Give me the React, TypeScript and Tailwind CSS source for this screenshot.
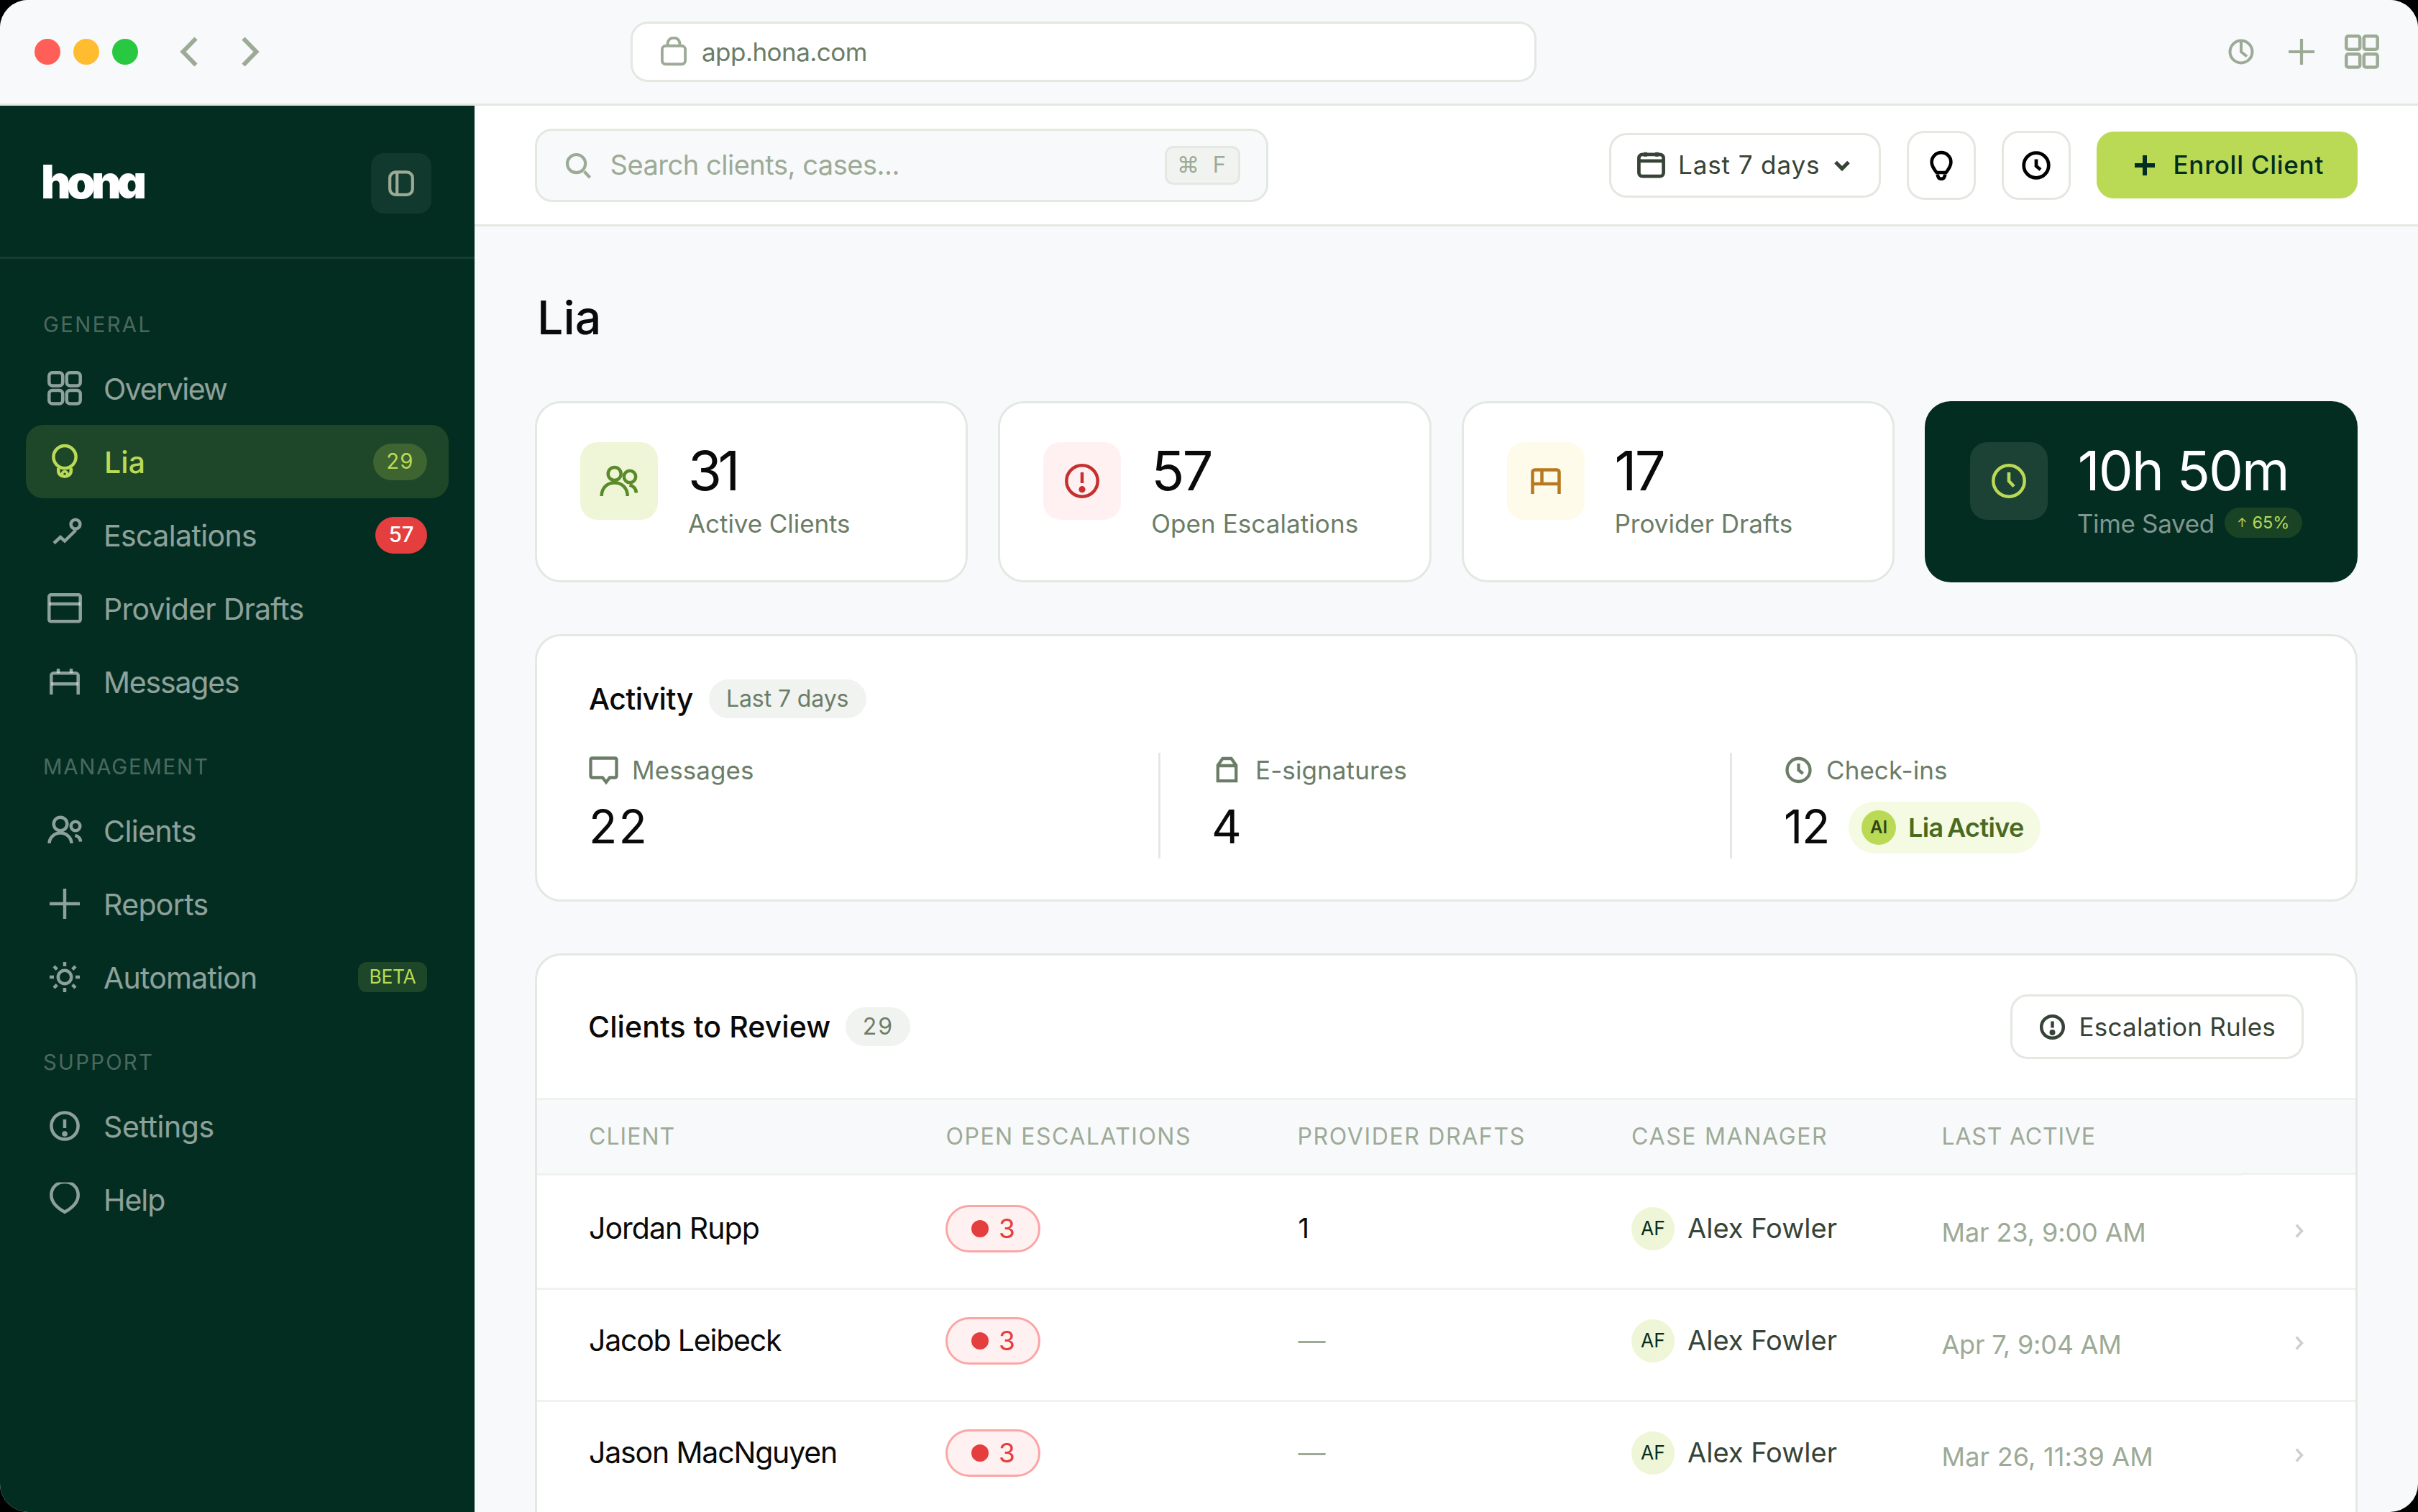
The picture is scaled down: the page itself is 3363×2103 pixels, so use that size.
import React from 'react'
import type { ReactNode } from 'react'

type IconProps = { w: number; h?: number; sw?: number; children: ReactNode; className?: string }

function Icon({ w, h = w, sw = 4.5, children, className = '' }: IconProps) {
  return (
    <svg
      width={w}
      height={h}
      viewBox={`0 0 ${w} ${h}`}
      fill="none"
      stroke="currentColor"
      strokeWidth={sw}
      className={`block shrink-0 ${className}`}
      aria-hidden="true"
    >
      {children}
    </svg>
  )
}

const GridIcon = () => (
  <Icon w={54} className="opacity-55">
    <rect x="5.3" y="5.3" width="18.9" height="18.2" rx="4.5" />
    <rect x="29.8" y="5.3" width="18.9" height="18.2" rx="4.5" />
    <rect x="5.3" y="30" width="18.9" height="18.6" rx="4.5" />
    <rect x="29.8" y="30" width="18.9" height="18.6" rx="4.5" />
  </Icon>
)

const LiaIcon = () => (
  <Icon w={54}>
    <circle cx="27" cy="20.6" r="15.6" />
    <path d="M18.2 36v4a8.8 7.8 0 0 0 17.6 0v-4" />
    <path d="M23.6 45v-1a3.4 3.4 0 0 1 6.800 0v1" strokeWidth="3.6" />
  </Icon>
)

const EscalationIcon = () => (
  <Icon w={54} className="opacity-55">
    <circle cx="42" cy="12.2" r="6.4" />
    <path d="M12 38.5 21 30l6 5.5L42.4 20.5" />
  </Icon>
)

const DraftsIcon = () => (
  <Icon w={54}>
    <rect x="5.3" y="8.3" width="43.4" height="37" rx="2.5" opacity=".55" />
    <path d="M5.3 21h43.4" opacity=".55" />
  </Icon>
)

const MessagesIcon = () => (
  <Icon w={54}>
    <path d="M8.3 45V18.5a3.2 3.2 0 0 1 3.2-3.2h31a3.2 3.2 0 0 1 3.2 3.2V45" opacity=".55" />
    <path d="M8.3 30.2h37.4M18 9v6M36 9v6" opacity=".55" />
  </Icon>
)

const ClientsIcon = () => (
  <Icon w={54} className="opacity-55">
    <circle cx="21" cy="18" r="9.3" />
    <path d="M5.6 45a15.4 14.4 0 0 1 30.8 0" />
    <circle cx="42" cy="21" r="6.3" />
    <path d="M41.5 33.8c4.6 1.4 7.4 4.3 7.6 8.9" />
  </Icon>
)

const ReportsIcon = () => (
  <Icon w={54} className="opacity-55">
    <path d="M27 6v42M6 27h42" />
  </Icon>
)

const AutomationIcon = () => (
  <Icon w={54} className="opacity-55">
    <circle cx="27" cy="27" r="9.2" />
    <path d="M27 6v6M27 42v6M6 27h6M42 27h6M12 12l4.3 4.3M37.7 37.7l4.3 4.3M12 42l4.3-4.3M37.7 16.3 42 12" />
  </Icon>
)

const SettingsIcon = () => (
  <Icon w={54} className="opacity-55">
    <circle cx="27" cy="27" r="18.6" />
    <path d="M27 18v12" />
    <circle cx="27" cy="38" r="3.8" fill="currentColor" stroke="none" />
  </Icon>
)

const HelpIcon = () => (
  <Icon w={54} className="opacity-55">
    <clipPath id="help-clip">
      <rect x="0" y="3.4" width="54" height="50" />
    </clipPath>
    <path
      clipPath="url(#help-clip)"
      d="M27 44.8C17.5 39.5 8.3 31 8.3 21.2 8.3 10.5 16.5 3 27 3s18.7 7.5 18.7 18.2C45.7 31 36.5 39.5 27 44.8Z"
    />
  </Icon>
)

type NavEntry = { label: string; ls: string; icon: () => ReactNode; badge?: ReactNode; active?: boolean }

const NAV: { title: string; ls: string; items: NavEntry[] }[] = [
  {
    title: 'GENERAL',
    ls: 'tracking-[0.081em]',
    items: [
      { label: 'Overview', ls: 'tracking-[-0.036em]', icon: GridIcon },
      {
        label: 'Lia',
        ls: 'tracking-[0.004em]',
        icon: LiaIcon,
        active: true,
        badge: (
          <span className="flex h-[51px] w-[75px] items-center justify-center rounded-full bg-[#bada55]/20 text-[29.3px] tracking-[0.04em] text-[#bada55]">
            29
          </span>
        ),
      },
      {
        label: 'Escalations',
        ls: 'tracking-[-0.015em]',
        icon: EscalationIcon,
        badge: (
          <span className="flex h-[51px] w-[72px] items-center justify-center rounded-full bg-[#e53e3e] text-[29.3px] font-[450] tracking-[-0.007em] text-white">
            57
          </span>
        ),
      },
      { label: 'Provider Drafts', ls: 'tracking-[-0.019em]', icon: DraftsIcon },
      { label: 'Messages', ls: 'tracking-[-0.029em]', icon: MessagesIcon },
    ],
  },
  {
    title: 'MANAGEMENT',
    ls: 'tracking-[0.062em]',
    items: [
      { label: 'Clients', ls: 'tracking-[-0.013em]', icon: ClientsIcon },
      { label: 'Reports', ls: 'tracking-[-0.016em]', icon: ReportsIcon },
      {
        label: 'Automation',
        ls: 'tracking-[-0.019em]',
        icon: AutomationIcon,
        badge: (
          <span className="flex h-[42px] w-[96px] items-center justify-center rounded-[12px] bg-[#bada55]/15 text-[26.4px] tracking-[-0.011em] text-[#bada55]">
            BETA
          </span>
        ),
      },
    ],
  },
  {
    title: 'SUPPORT',
    ls: 'tracking-[0.078em]',
    items: [
      { label: 'Settings', ls: 'tracking-[-0.01em]', icon: SettingsIcon },
      { label: 'Help', ls: 'tracking-[-0.025em]', icon: HelpIcon },
    ],
  },
]

function BrowserBar() {
  return (
    <header className="flex h-[147px] shrink-0 items-center border-b-3 border-[#e3e8e1] bg-[#f8f9fb] pr-[54px] pl-[48px] text-[#9caa96]">
      <div className="flex gap-[18px]">
        <span className="size-9 rounded-full bg-[#ff5f57]" />
        <span className="size-9 rounded-full bg-[#febc2e]" />
        <span className="size-9 rounded-full bg-[#28c840]" />
      </div>
      <Icon w={25} h={42} sw={6} className="ml-[58px]">
        <path d="M22.5 2.500 4.500 21l18 18.500" />
      </Icon>
      <Icon w={25} h={42} sw={6} className="ml-[61px]">
        <path d="M2.500 2.500 20.500 21l-18 18.500" />
      </Icon>
      <div className="ml-[516px] flex h-[84px] w-[1260px] items-center rounded-[24px] border-3 border-[#e3e8e1] bg-white pl-[39px]">
        <Icon w={36} h={42} sw={3.9}>
          <rect x="1.9" y="12.8" width="32.2" height="25.5" rx="5" />
          <path d="M9.500 12.500V10a8.500 8.500 0 0 1 17 0v2.500" />
        </Icon>
        <span className="ml-[21px] text-[35px] tracking-[-0.0155em] text-[#6b7d67]">app.hona.com</span>
      </div>
      <Icon w={36} sw={4} className="ml-auto">
        <circle cx="18" cy="18" r="15.5" />
        <path d="M18 3v15l8 6.5" />
      </Icon>
      <Icon w={36} sw={4.2} className="ml-[48px]">
        <path d="M18 0v36M0 18h36" />
      </Icon>
      <Icon w={48} sw={4.5} className="ml-[42px]">
        <rect x="2.3" y="2.3" width="18.9" height="18.4" rx="2.8" />
        <rect x="26.8" y="2.3" width="18.9" height="18.4" rx="2.8" />
        <rect x="2.3" y="27.2" width="18.9" height="18.4" rx="2.8" />
        <rect x="26.8" y="27.2" width="18.9" height="18.4" rx="2.8" />
      </Icon>
    </header>
  )
}

function Sidebar() {
  return (
    <aside className="w-[660px] shrink-0 bg-[#032d20] text-white">
      <div className="flex items-center justify-between border-b-3 border-white/8 px-[60px] pt-[66px] pb-[60px]">
        <span className="-mt-[4px] -ml-[3px] text-[64px] leading-[64px] font-black tracking-[-0.09em] [font-feature-settings:'cv11']">
          hona
        </span>
        <button className="flex size-[84px] items-center justify-center rounded-[18px] bg-white/6 text-[#9caa96]">
          <Icon w={36} sw={4.2}>
            <rect x="2.2" y="2.4" width="31.600" height="31.400" rx="8" />
            <path d="M12.2 2v32" />
          </Icon>
        </button>
      </div>
      <nav className="flex flex-col gap-[49.5px] px-9 pt-[73.5px]">
        {NAV.map((group) => (
          <section key={group.title}>
            <h2 className={`mb-[19.5px] pl-6 text-[29.3px] leading-[36px] text-white/30 ${group.ls}`}>{group.title}</h2>
            {group.items.map(({ label, ls, icon: Glyph, badge, active }) => (
              <a
                key={label}
                className={`flex h-[102px] items-center rounded-[24px] pr-[30px] pl-[27px] ${
                  active ? 'bg-[#bada55]/15 text-[#bada55]' : 'text-white'
                }`}
              >
                <Glyph />
                <span
                  className={`ml-[27px] flex-1 pt-[2px] text-[41px] leading-[54px] whitespace-nowrap ${ls} ${
                    active ? 'pl-px font-[450]' : 'text-white/55'
                  }`}
                >
                  {label}
                </span>
                {badge}
              </a>
            ))}
          </section>
        ))}
      </nav>
    </aside>
  )
}

function TopBar() {
  return (
    <div className="flex h-[168px] shrink-0 items-center border-b-3 border-[#e3e8e1] bg-white px-[84px]">
      <div className="mr-auto flex h-[102px] w-[1020px] items-center rounded-[24px] border-3 border-[#e3e8e1] bg-[#f8f9fb] pr-[36px] pl-[39px] text-[#9caa96]">
        <Icon w={38} sw={4.2}>
          <circle cx="15.6" cy="16.6" r="12.6" />
          <path d="M26.500 27.500 34.500 36" />
        </Icon>
        <span className="ml-[24.5px] text-[38px] tracking-[-0.0125em]">Search clients, cases...</span>
        <kbd className="ml-auto flex h-[54px] w-[105px] items-center justify-between rounded-[12px] border-3 border-[#e3e8e1] bg-[#f1f3f0] pr-[17px] pl-[14px] font-['Inter'] text-[31px]">
          <span>⌘</span>
          <span>F</span>
        </kbd>
      </div>
      <div className="flex items-center gap-9 text-[35px]">
        <button className="flex h-[90px] w-[378px] items-center rounded-[24px] border-3 border-[#e3e8e1] pl-[36px] text-[#364336]">
          <Icon w={39} h={39} sw={4.7}>
            <rect x="2.4" y="4.8" width="34.2" height="30.4" rx="5" />
            <path d="M2.4 13.8h34.200M11.500 1.800v6M27.500 1.800v6" />
          </Icon>
          <span className="ml-[18px] tracking-[0.0254em]">Last 7 days</span>
          <Icon w={24} h={18} sw={5.2} className="ml-[19px]">
            <path d="m3 4.500 9 9 9-9" />
          </Icon>
        </button>
        <button className="flex size-[96px] items-center justify-center rounded-[24px] border-3 border-[#e3e8e1] text-black">
          <Icon w={42} sw={4.6}>
            <path d="M14.500 31C10.500 26 7.600 21.500 7.600 16.500a13.400 13.400 0 0 1 26.800 0c0 5-2.900 9.500-6.900 14.500Z" />
            <path d="M15.700 33.500c.5 4.300 2.400 6.300 5.300 6.300s4.800-2 5.300-6.300" />
          </Icon>
        </button>
        <button className="flex size-[96px] items-center justify-center rounded-[24px] border-3 border-[#e3e8e1] text-black">
          <Icon w={42} sw={4.700}>
            <circle cx="21" cy="21" r="17.3" />
            <path d="M21 12.500V22l6 5" />
          </Icon>
        </button>
        <button className="flex h-[93px] w-[363px] items-center rounded-[24px] bg-[#bada55] pl-[53px] font-[450] text-[#032d20]">
          <Icon w={28} sw={6}>
            <path d="M14 0v28M0 14h28" />
          </Icon>
          <span className="ml-[25.5px] tracking-[0.021em]">Enroll Client</span>
        </button>
      </div>
    </div>
  )
}

const STATS = [
  {
    value: '31',
    vls: 'tracking-[-0.07em]',
    label: 'Active Clients',
    lls: 'tracking-[-0.002em]',
    tile: 'bg-[#eff6d7] text-[#5a8a2a]',
    icon: (
      <Icon w={54} sw={4.5}>
        <circle cx="20.7" cy="17" r="9" />
        <path d="M2.7 48C2.7 37 10 29.5 20.7 29.5S38.7 37 38.7 48" />
        <circle cx="42" cy="21" r="8.2" />
        <path d="M41.500 32.500c6 1.500 9 5 9.500 11" />
      </Icon>
    ),
  },
  {
    value: '57',
    vls: 'tracking-[-0.04em]',
    label: 'Open Escalations',
    lls: 'tracking-[0.002em]',
    tile: 'bg-[#fff1f1] text-[#c53030]',
    icon: (
      <Icon w={48}>
        <circle cx="24" cy="24" r="21.7" />
        <path d="M24 12v15" />
        <circle cx="24" cy="35.7" r="4.6" fill="currentColor" stroke="none" />
      </Icon>
    ),
  },
  {
    value: '17',
    vls: 'tracking-[-0.035em]',
    label: 'Provider Drafts',
    lls: 'tracking-[0em]',
    tile: 'bg-[#fffbeb] text-[#b7791f]',
    icon: (
      <Icon w={54}>
        <path d="M8.500 45V14.500a3 3 0 0 1 3-3h31a3 3 0 0 1 3 3V45M8.500 31h37M21.500 11.500V31" />
      </Icon>
    ),
  },
]

function StatCards() {
  return (
    <div className="grid grid-cols-4 gap-[42px]">
      {STATS.map((s) => (
        <div
          key={s.label}
          className="flex h-[252px] gap-[42px] rounded-[36px] border-3 border-[#e4e8e2] bg-white pt-[54px] pl-[60px]"
        >
          <span className={`flex size-[108px] shrink-0 items-center justify-center rounded-[24px] ${s.tile}`}>{s.icon}</span>
          <div className="whitespace-nowrap">
            <p className={`h-[78px] text-[76px] leading-[78px] font-[430] text-[#0a0a0a] ${s.vls}`}>{s.value}</p>
            <p className={`mt-[8px] text-[35px] leading-[54px] text-[#6b7d67] ${s.lls}`}>{s.label}</p>
          </div>
        </div>
      ))}
      <div className="flex h-[252px] gap-[42px] rounded-[36px] bg-[#032d20] pt-[57px] pl-[63px] text-white">
        <span className="flex size-[108px] shrink-0 items-center justify-center rounded-[24px] bg-white/10 text-[#bada55]">
          <Icon w={48}>
            <circle cx="24" cy="24" r="21.7" />
            <path d="M24 12v12l7 7.5" />
          </Icon>
        </span>
        <div className="whitespace-nowrap">
          <p className="h-[78px] text-[76px] leading-[78px] font-[430] tracking-[-0.024em]">10h 50m</p>
          <p className="mt-[8px] flex items-center text-[35px] leading-[54px] text-white/50">
            <span className="-ml-px tracking-[-0.0094em]">Time Saved</span>
            <span className="-mt-[3px] ml-[14px] flex h-[42px] w-[108px] items-center justify-center gap-[7px] rounded-full bg-[#bada55]/13 text-[23.5px] text-[#bada55]">
              <span className="text-[17px]">↑</span>
              <span>65%</span>
            </span>
          </p>
        </div>
      </div>
    </div>
  )
}

function Activity() {
  return (
    <section className="mt-[72px] h-[372px] rounded-[36px] border-3 border-[#e4e8e2] bg-white px-[72px] pt-[60px]">
      <div className="flex items-center">
        <h2 className="text-[41px] leading-[54px] font-[450] tracking-[-0.013em] text-[#0a0a0a]">Activity</h2>
        <span className="ml-[22px] flex h-[54px] w-[219px] items-center justify-center rounded-full bg-[#f1f3f0] text-[32px] tracking-[-0.003em] text-[#6b7d67]">
          Last 7 days
        </span>
      </div>
      <div className="mt-[48px] grid h-[147px] grid-cols-3 text-[#6b7d67]">
        <div className="border-r-3 border-[#e4e8e2]">
          <div className="flex h-12 items-center gap-[18px] text-[35px]">
            <Icon w={42} sw={4.3}>
              <path d="M4.500 4.500h32a2 2 0 0 1 2 2v23a2 2 0 0 1-2 2H29l-5 6.500-5-6.500H4.500a2 2 0 0 1-2-2v-23a2 2 0 0 1 2-2Z" />
            </Icon>
            <span className="tracking-[0.002em]">Messages</span>
          </div>
          <p className="mt-[19px] text-[64.5px] leading-[73px] font-[430] tracking-[0.035em] text-[#0a0a0a]">22</p>
        </div>
        <div className="border-r-3 border-[#e4e8e2] pl-[72px]">
          <div className="flex h-12 items-center gap-[18px] text-[35px]">
            <Icon w={42} sw={4.3}>
              <path d="M7.800 14.500 14.500 5h12l6.700 9.500v21.700H7.800ZM7.800 15h25.400" />
            </Icon>
            <span className="tracking-[0.003em]">E-signatures</span>
          </div>
          <p className="mt-[19px] -ml-px text-[64.5px] leading-[73px] font-[430] text-[#0a0a0a]">4</p>
        </div>
        <div className="pl-[72px]">
          <div className="flex h-12 items-center gap-[17px] text-[35px]">
            <Icon w={42} sw={4.3}>
              <circle cx="20.500" cy="21" r="16" />
              <path d="M20.500 12v9l6 5" />
            </Icon>
            <span className="tracking-[0.0017em]">Check-ins</span>
          </div>
          <div className="mt-[18px] flex h-[75px] items-center">
            <p className="w-[63px] text-[64.5px] leading-[73px] font-[430] tracking-[-0.018em] text-[#0a0a0a]">12</p>
            <span className="ml-[27px] flex h-[72px] w-[267px] items-center rounded-full bg-[#f5fae3] pl-[18px]">
              <span className="flex size-[48px] items-center justify-center rounded-full bg-[#bada55] text-[24px] font-semibold text-[#32451a]">
                AI
              </span>
              <span className="ml-[17px] text-[36px] font-semibold tracking-[-0.0177em] whitespace-nowrap text-[#4a6b1f] [word-spacing:-0.08em]">
                Lia Active
              </span>
            </span>
          </div>
        </div>
      </div>
    </section>
  )
}

const ROWS = [
  { name: 'Jordan Rupp', ls: 'tracking-[-0.0236em]', drafts: '1', date: 'Mar 23, 9:00 AM', dls: 'tracking-[-0.003em]' },
  { name: 'Jacob Leibeck', ls: 'tracking-[-0.0295em]', drafts: '—', date: 'Apr 7, 9:04 AM', dls: 'tracking-[-0.006em]' },
  { name: 'Jason MacNguyen', ls: 'tracking-[-0.0284em]', drafts: '—', date: 'Mar 26, 11:39 AM', dls: 'tracking-[0.005em]' },
]

function ReviewTable() {
  return (
    <section className="mt-[72px] flex flex-1 flex-col overflow-hidden rounded-t-[36px] border-x-3 border-t-3 border-[#e4e8e2] bg-white">
      <div className="flex h-[198px] shrink-0 items-center px-[72px]">
        <h2 className="-ml-px pt-[2px] text-[41px] font-[450] tracking-[0.002em] text-[#0a0a0a]">Clients to Review</h2>
        <span className="ml-[21px] flex h-[54px] w-[90px] items-center justify-center rounded-full bg-[#f1f3f0] text-[32px] tracking-[0.06em] text-[#6b7d67]">
          29
        </span>
        <button className="ml-auto flex h-[90px] w-[408px] items-center rounded-[24px] border-3 border-[#e3e8e1] pl-[36px] text-[35px] whitespace-nowrap text-[#364336]">
          <Icon w={39}>
            <circle cx="19.500" cy="19.500" r="15.3" />
            <path d="M19.500 11.500v9" />
            <circle cx="19.500" cy="27" r="4" fill="currentColor" stroke="none" />
          </Icon>
          <span className="ml-[17.5px] tracking-[0.007em]">Escalation Rules</span>
        </button>
      </div>
      <div className="flex h-[108px] shrink-0 border-t-3 border-[#f0f2ef]">
        <div className="grid h-full w-[2371px] grid-cols-[496.5px_490px_463.5px_432.5px_1fr] items-center border-b-3 border-[#f0f2ef] bg-[#f8f9fb] pl-[72px] text-[32px] whitespace-nowrap text-[#9caa96]">
          <span className="tracking-[0.032em]">CLIENT</span>
          <span className="tracking-[0.0465em]">OPEN ESCALATIONS</span>
          <span className="-ml-px tracking-[0.051em]">PROVIDER DRAFTS</span>
          <span className="tracking-[0.052em]">CASE MANAGER</span>
          <span className="-ml-px tracking-[0.0255em]">LAST ACTIVE</span>
        </div>
        <div className="h-[103.5px] flex-1 border-b-3 border-[#f0f2ef] bg-[#f8f9fb]" />
      </div>
      {ROWS.map((r, i) => (
        <div
          key={r.name}
          className={`grid h-[156px] shrink-0 grid-cols-[496.5px_490px_463.5px_432.5px_1fr_auto] items-center px-[72px] whitespace-nowrap ${
            i === 0 ? 'pb-[9px]' : 'border-t-3 border-[#f0f2ef] pb-[12px]'
          }`}
        >
          <span className={`text-[41px] text-[#0a0a0a] ${r.ls}`}>{r.name}</span>
          <span className="-ml-px flex h-[66px] w-[132px] items-center gap-[14.5px] rounded-full border-3 border-[#fca5a5] bg-[#fff1f1] pl-[33px] text-[37px] text-[#e53e3e]">
            <span className="size-6 rounded-full bg-[#e53e3e]" />3
          </span>
          <span className={r.drafts === '1' ? 'text-[38px] text-[#0a0a0a]' : 'text-[38px] text-[#9caa96]'}>{r.drafts}</span>
          <span className="flex items-center gap-[18px] text-[38px] text-[#364336]">
            <span className="flex size-[60px] items-center justify-center rounded-full bg-[#eff6d7] text-[26.4px] text-[#032d20]">
              AF
            </span>
            Alex Fowler
          </span>
          <span className={`-ml-px pt-[10px] text-[36px] text-[#9caa96] ${r.dls}`}>{r.date}</span>
          <Icon w={12} h={20} sw={3.5} className="mt-[7px]">
            <path className="text-[#cbd2c8]" stroke="currentColor" d="M2 1.500c2 3 5 6 7.500 8.500C7 12.500 4 15.500 2 18.500" />
          </Icon>
        </div>
      ))}
    </section>
  )
}

export default function App() {
  return (
    <div className="h-[2103px] w-[3363px] bg-black font-['Inter',sans-serif]">
      <div className="flex h-full w-full flex-col overflow-hidden rounded-[39px] bg-[#f8f9fb]">
        <BrowserBar />
        <div className="flex min-h-0 flex-1">
          <Sidebar />
          <main className="flex min-w-0 flex-1 flex-col">
            <TopBar />
            <div className="flex min-h-0 flex-1 flex-col px-[84px] pt-[87px]">
              <h1 className="mb-[75px] ml-[3px] h-[81px] text-[64.5px] leading-[81px] font-[480] text-[#0a0a0a]">Lia</h1>
              <StatCards />
              <Activity />
              <ReviewTable />
            </div>
          </main>
        </div>
      </div>
    </div>
  )
}
